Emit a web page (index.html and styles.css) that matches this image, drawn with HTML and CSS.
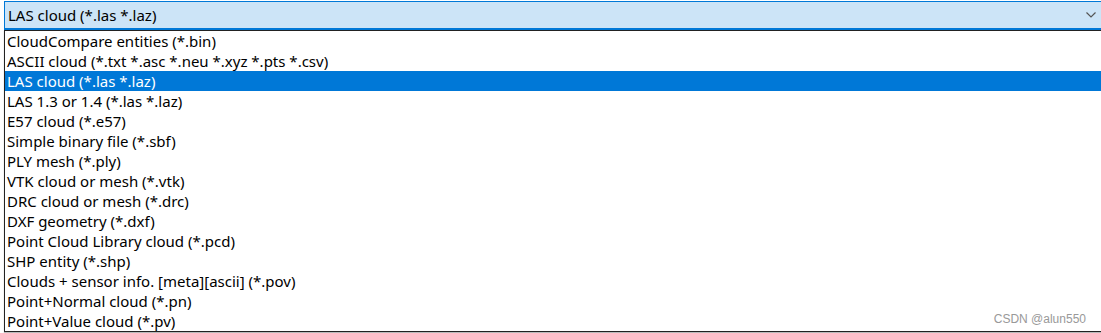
FILE: index.html
```html
<!DOCTYPE html>
<html lang="en">
<head>
  <meta charset="UTF-8" />
  <title>Open file type</title>
  <link rel="stylesheet" href="styles.css">
</head>
<body>

  <!-- Selected file type -->
  <div class="combo">
    <span class="combo-text">LAS cloud (*.las *.laz)</span>
    <svg class="chevron" width="10" height="6" viewBox="0 0 10 6">
      <path d="M0.5 0.5 L5 5 L9.5 0.5" fill="none" stroke="#555" stroke-width="1.2"/>
    </svg>
  </div>

  <!-- Drop-down list -->
  <ul class="list">
    <li>CloudCompare entities (*.bin)</li>
    <li>ASCII cloud (*.txt *.asc *.neu *.xyz *.pts *.csv)</li>
    <li class="active">LAS cloud (*.las *.laz)</li>
    <li>LAS 1.3 or 1.4 (*.las *.laz)</li>
    <li>E57 cloud (*.e57)</li>
    <li>Simple binary file (*.sbf)</li>
    <li>PLY mesh (*.ply)</li>
    <li>VTK cloud or mesh (*.vtk)</li>
    <li>DRC cloud or mesh (*.drc)</li>
    <li>DXF geometry (*.dxf)</li>
    <li>Point Cloud Library cloud (*.pcd)</li>
    <li>SHP entity (*.shp)</li>
    <li>Clouds + sensor info. [meta][ascii] (*.pov)</li>
    <li>Point+Normal cloud (*.pn)</li>
    <li>Point+Value cloud (*.pv)</li>
  </ul>

  <div class="mark">CSDN @alun550</div>

</body>
</html>
```

FILE: styles.css
```css
body {
  margin: 0;
  width: 1101px;
  height: 333px;
  overflow: hidden;
  background: #fff;
  font-family: "Noto Sans", "Open Sans", sans-serif;
  font-size: 15px;
  color: #000;
  position: relative;
}

.combo {
  margin: 1px 0 0 4px;
  height: 26px;
  border: 1px solid #0078d7;
  border-bottom-width: 2px;
  border-right: none;
  background: #cce4f7;
  display: flex;
  align-items: center;
  justify-content: space-between;
  padding: 0 4px 0 3px;
}

.combo-text {
  line-height: 20px;
}

.chevron {
  margin-right: 1px;
}

.list {
  list-style: none;
  margin: 0 0 0 4px;
  padding: 0;
  border: 1px solid #222;
  border-right: none;
  box-shadow: 0 1px 1px #bbb;
}

.list li {
  height: 20px;
  line-height: 20px;
  padding-left: 2px;
  white-space: nowrap;
}

.list li.active {
  background: #0078d7;
  color: #fff;
}

.mark {
  position: absolute;
  right: 15px;
  bottom: 7px;
  font-family: "Liberation Sans", sans-serif;
  font-size: 12px;
  color: #999;
}
```
